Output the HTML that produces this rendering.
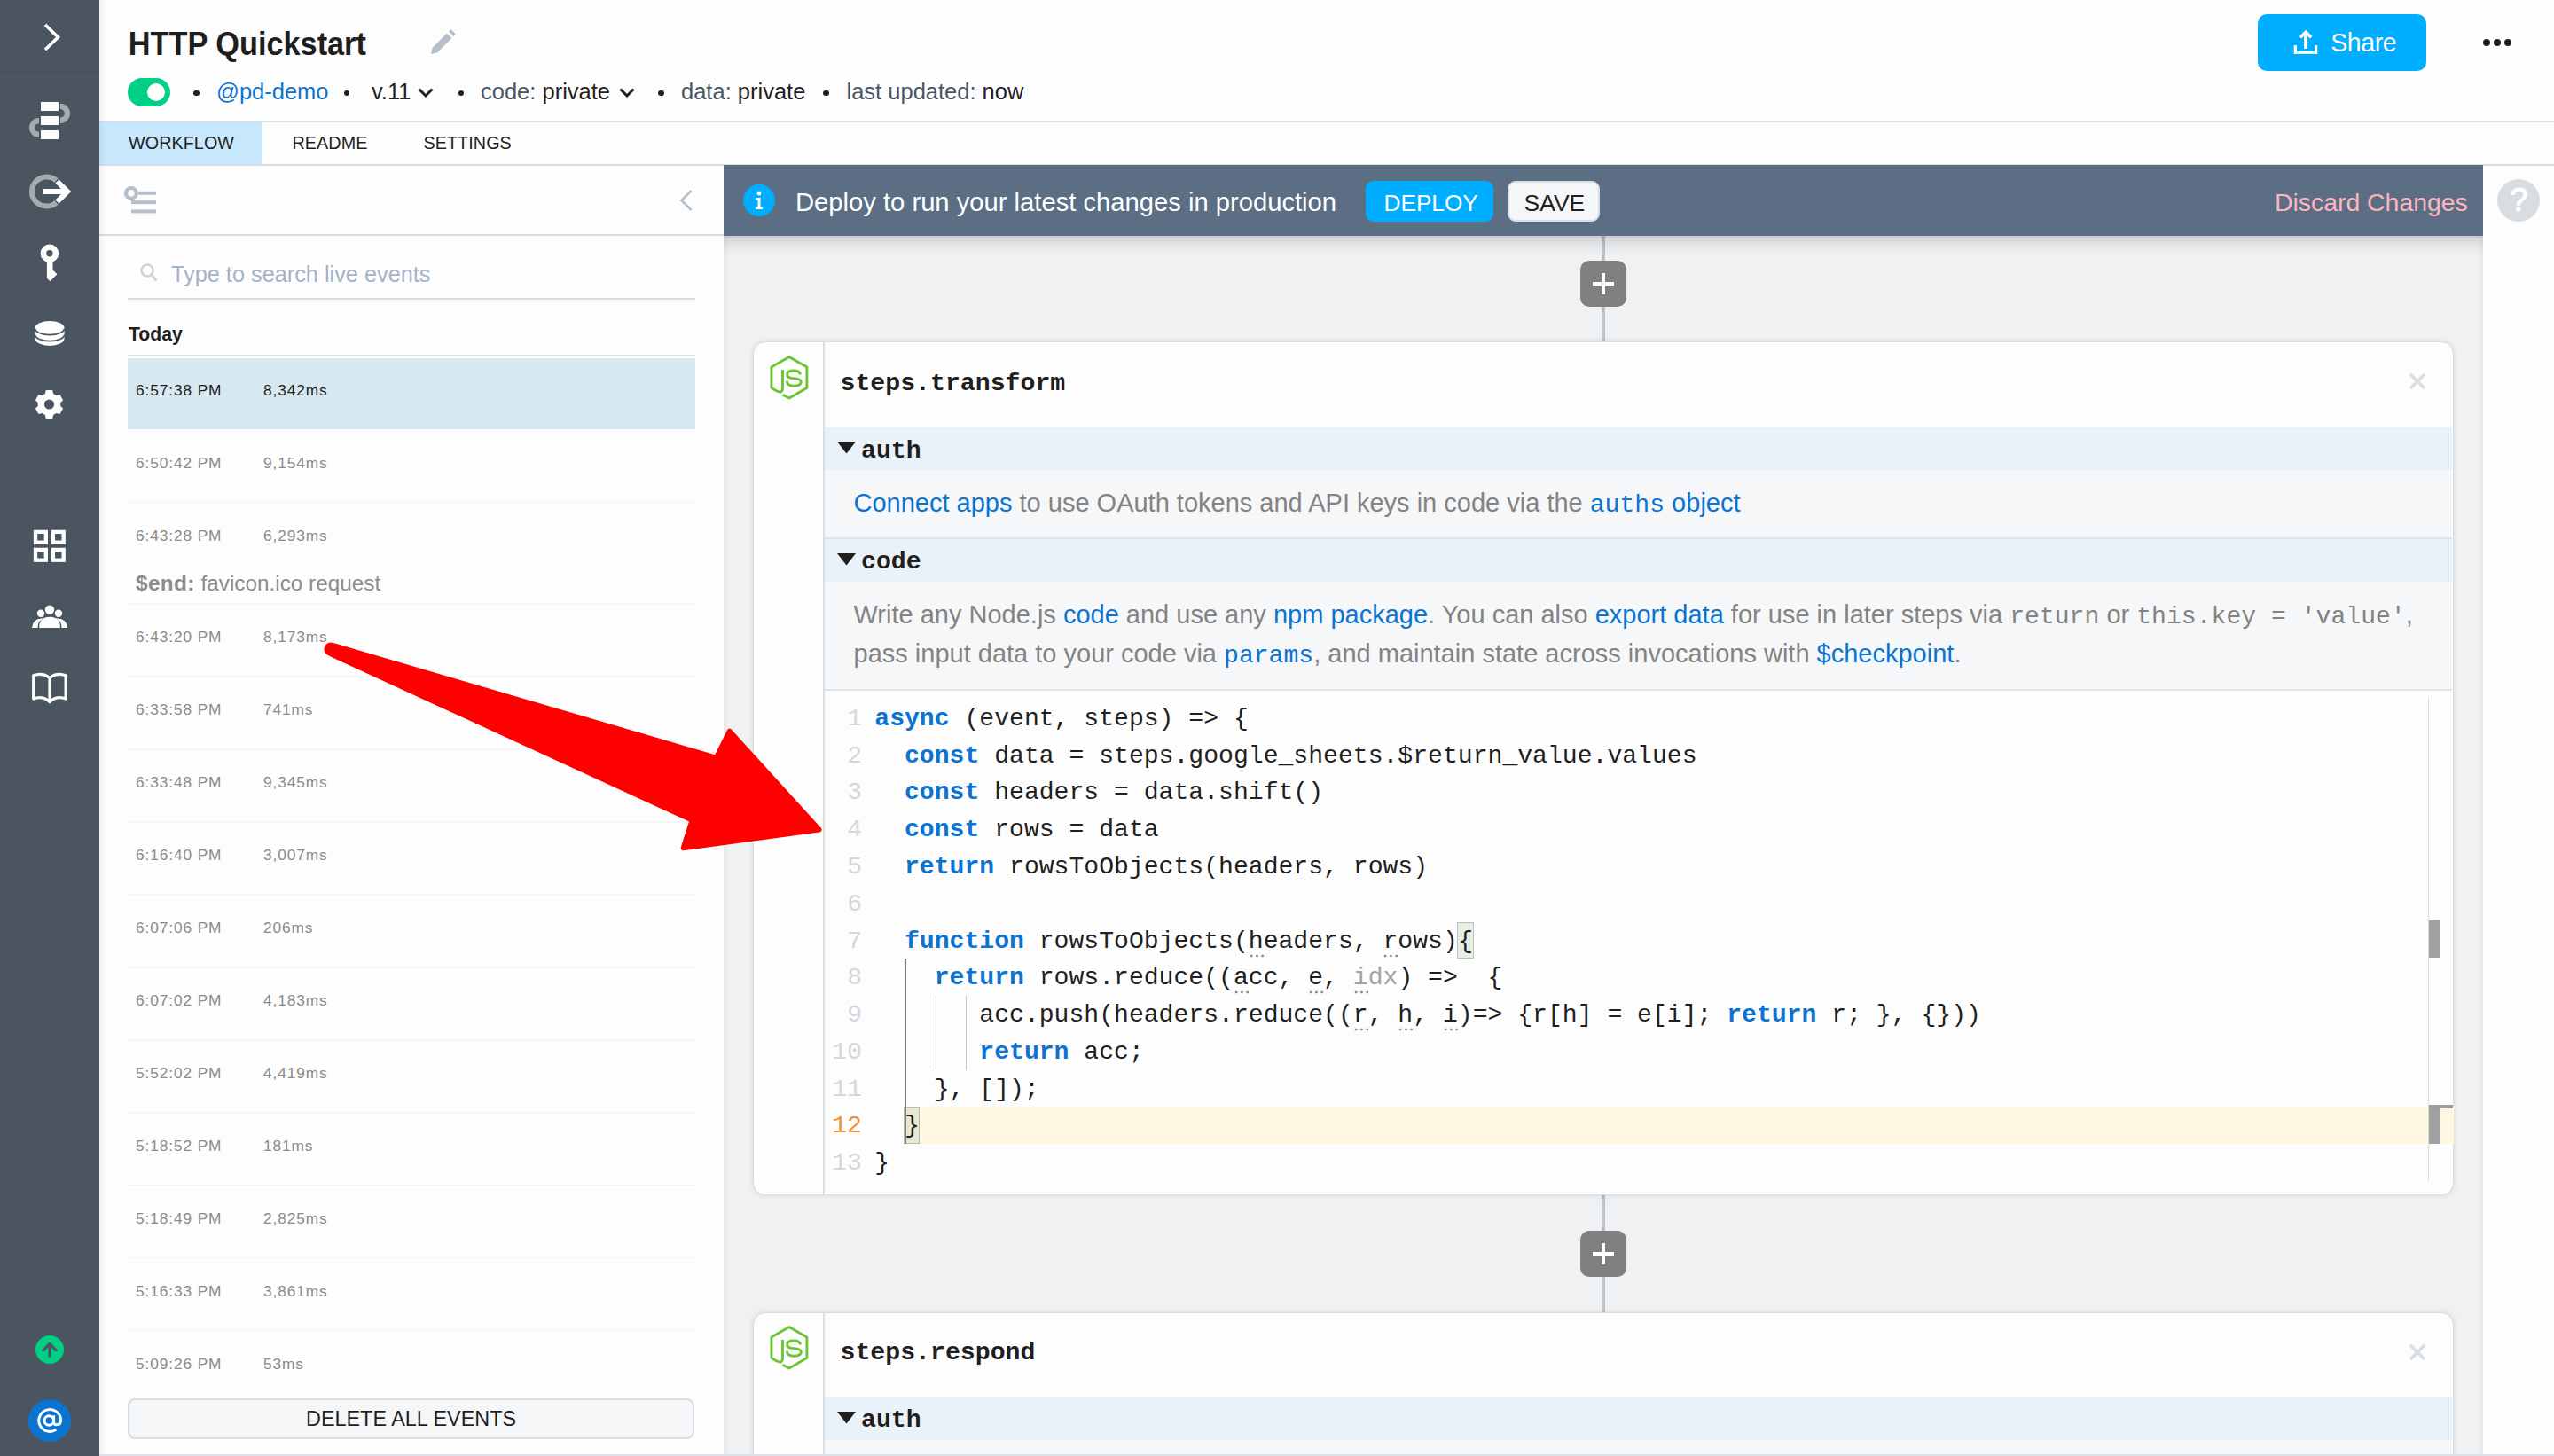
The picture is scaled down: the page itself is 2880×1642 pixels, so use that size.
<!DOCTYPE html><html><head><meta charset="utf-8"><style>html,body{margin:0;padding:0;width:2880px;height:1642px;overflow:hidden;background:#fdfdfe}</style></head><body><div style="position:absolute;left:0px;top:0px;width:112px;height:1642px;background:#4a5560"></div><div style="position:absolute;left:0px;top:0px;width:112px;height:80px;background:#4b5561"></div><div style="position:absolute;left:0px;top:80px;width:112px;height:2px;background:#47515c"></div><svg style="position:absolute;left:0;top:0" width="112" height="900" viewBox="0 0 112 900"><path d="M51 28 L65.5 42 L51 56" fill="none" stroke="#fff" stroke-width="3.6"/><rect x="46" y="115" width="20" height="10" fill="#fff"/><rect x="46" y="131" width="20" height="10" fill="#fff"/><rect x="46" y="147" width="20" height="10" fill="#fff"/><path d="M68 119.95 A7.95 7.95 0 0 1 68 135.85" fill="none" stroke="#a5abb1" stroke-width="6.2"/><path d="M44 136.05 A7.95 7.95 0 0 0 44 151.95" fill="none" stroke="#a5abb1" stroke-width="6.2"/><path d="M63.5 203.5 A16.6 16.6 0 1 0 63.5 228.5" fill="none" stroke="#a5abb1" stroke-width="6"/><path d="M48 216 H72" stroke="#fff" stroke-width="6"/><path d="M64.5 204.5 L76 216 L64.5 227.5" fill="none" stroke="#fff" stroke-width="6"/><circle cx="55.9" cy="285.7" r="7" fill="none" stroke="#fff" stroke-width="6.6"/><path d="M52.9 290 V313.6 L56.4 317.3 L64.4 309.3 L59.5 304.4 V290 Z" fill="#fff"/><path d="M39.6 369.8 A16.45 7.9 0 0 1 72.5 369.8 V382 A16.45 7.9 0 0 1 39.6 382 Z" fill="#fff"/><path d="M39.6 370.5 A16.45 7.2 0 0 0 72.5 370.5 M39.6 377.5 A16.45 7.2 0 0 0 72.5 377.5" fill="none" stroke="#4a5560" stroke-width="1.7"/><path d="M50.71 444.13 L51.83 440.12 L59.17 440.12 L60.29 444.13 L61.90 444.91 L63.38 445.91 L67.42 444.88 L71.09 451.23 L68.18 454.22 L68.30 456.00 L68.18 457.78 L71.09 460.77 L67.42 467.12 L63.38 466.09 L61.90 467.09 L60.29 467.87 L59.17 471.88 L51.83 471.88 L50.71 467.87 L49.10 467.09 L47.62 466.09 L43.58 467.12 L39.91 460.77 L42.82 457.78 L42.70 456.00 L42.82 454.22 L39.91 451.23 L43.58 444.88 L47.62 445.91 L49.10 444.91 Z M61.1 456 A5.6 5.6 0 1 0 49.9 456 A5.6 5.6 0 1 0 61.1 456 Z" fill="#fff" fill-rule="evenodd"/><g fill="none" stroke="#fff" stroke-width="4.3"><rect x="40" y="599.9" width="11.8" height="11.8"/><rect x="59.9" y="599.9" width="11.8" height="11.8"/><rect x="40" y="619.9" width="11.8" height="11.8"/><rect x="59.9" y="619.9" width="11.8" height="11.8"/></g><path d="M36 708 Q37 697.5 47 697.5 L50 697.5 Q42 700 42.5 708 Z" fill="#fff"/><path d="M76 708 Q75 697.5 65 697.5 L62 697.5 Q70 700 69.5 708 Z" fill="#fff"/><path d="M44.2 708 Q44.2 695.8 56 695.8 Q67.9 695.8 67.9 708 Z" fill="#fff"/><circle cx="56" cy="687.6" r="5.2" fill="#fff"/><circle cx="46" cy="691.7" r="4.2" fill="#fff"/><circle cx="66" cy="691.7" r="4.2" fill="#fff"/><path d="M37.8 761.8 Q48 758 56 764.5 Q64 758 74.2 761.8 V788 Q64 784 56 791.5 Q48 784 37.8 788 Z" fill="none" stroke="#fff" stroke-width="3.4" stroke-linejoin="round"/><path d="M56 764.5 V790" stroke="#fff" stroke-width="3.2"/></svg><svg style="position:absolute;left:40px;top:1506px" width="32" height="32" viewBox="0 0 32 32"><circle cx="16" cy="16" r="16" fill="#00d084"/><path d="M16 23.2 V9.6 M8.9 16.6 L16 9.5 L23.1 16.6" fill="none" stroke="#4a5560" stroke-width="3.3" stroke-linecap="round" stroke-linejoin="round"/></svg><svg style="position:absolute;left:32px;top:1578px" width="48" height="48" viewBox="0 0 48 48"><circle cx="24" cy="24" r="24" fill="#0b74d1"/><g fill="none" stroke="#fff" stroke-width="3"><circle cx="23.3" cy="24" r="5.3"/><path d="M28.6 18.2 V25.5 Q28.6 28.8 31.6 28.8 Q36.6 28.8 36.6 23.5 A12.4 12.4 0 1 0 31.2 34.2"/></g></svg><div style="position:absolute;left:112px;top:0px;width:2768px;height:137px;background:#fdfdfe"></div><div style="position:absolute;left:112px;top:136px;width:2768px;height:2px;background:#d6dde4"></div><div style="position:absolute;left:144.8px;top:32.97px;font-family:'Liberation Sans', sans-serif;font-size:34.3px;line-height:34.3px;color:#1e1e1e;font-weight:bold;white-space:pre;transform:scaleY(1.06);transform-origin:0 29px">HTTP Quickstart</div><svg style="position:absolute;left:484px;top:32px" width="32" height="32" viewBox="0 0 32 32"><path d="M2 29 L3.5 22 L20 5.5 L25.5 11 L9 27.5 Z" fill="#b4bfcb"/><path d="M22 3.5 L24.5 1 L30 6.5 L27.5 9 Z" fill="#b4bfcb"/></svg><div style="position:absolute;left:144px;top:88px;width:48px;height:32px;background:#00d084;border-radius:16px"></div><div style="position:absolute;left:166px;top:94px;width:20px;height:20px;background:#fff;border-radius:50%"></div><div style="position:absolute;left:218.3px;top:101.8px;width:6.4px;height:6.4px;background:#1f1f1f;border-radius:50%"></div><div style="position:absolute;left:387.8px;top:101.8px;width:6.4px;height:6.4px;background:#1f1f1f;border-radius:50%"></div><div style="position:absolute;left:516.8px;top:101.8px;width:6.4px;height:6.4px;background:#1f1f1f;border-radius:50%"></div><div style="position:absolute;left:742.3px;top:101.8px;width:6.4px;height:6.4px;background:#1f1f1f;border-radius:50%"></div><div style="position:absolute;left:928.3px;top:101.8px;width:6.4px;height:6.4px;background:#1f1f1f;border-radius:50%"></div><div style="position:absolute;left:244px;top:90.71px;font-family:'Liberation Sans', sans-serif;font-size:25.5px;line-height:25.5px;color:#0b74d1;font-weight:normal;white-space:pre;">@pd-demo</div><div style="position:absolute;left:419px;top:90.71px;font-family:'Liberation Sans', sans-serif;font-size:25.5px;line-height:25.5px;color:#1f1f1f;font-weight:normal;white-space:pre;">v.11</div><div style="position:absolute;left:542px;top:90.71px;font-family:'Liberation Sans', sans-serif;font-size:25.5px;line-height:25.5px;color:#1f1f1f;font-weight:normal;white-space:pre;"><span style="color:#4a5664">code:</span> private</div><div style="position:absolute;left:768px;top:90.71px;font-family:'Liberation Sans', sans-serif;font-size:25.5px;line-height:25.5px;color:#1f1f1f;font-weight:normal;white-space:pre;"><span style="color:#4a5664">data:</span> private</div><div style="position:absolute;left:954.5px;top:90.71px;font-family:'Liberation Sans', sans-serif;font-size:25.5px;line-height:25.5px;color:#1f1f1f;font-weight:normal;white-space:pre;"><span style="color:#4a5664">last updated:</span> now</div><svg style="position:absolute;left:471px;top:98px" width="18" height="14" viewBox="0 0 18 14"><path d="M1.5 2.5 L9 10 L16.5 2.5" fill="none" stroke="#1f1f1f" stroke-width="3"/></svg><svg style="position:absolute;left:698px;top:98px" width="18" height="14" viewBox="0 0 18 14"><path d="M1.5 2.5 L9 10 L16.5 2.5" fill="none" stroke="#1f1f1f" stroke-width="3"/></svg><div style="position:absolute;left:2546px;top:16px;width:190px;height:64px;background:#00aeff;border-radius:10px"></div><svg style="position:absolute;left:2584px;top:32px" width="32" height="32" viewBox="0 0 32 32"><path d="M4.3 19 V27.5 H27.6 V19" fill="none" stroke="#fff" stroke-width="3.2"/><path d="M16.1 23 V5" fill="none" stroke="#fff" stroke-width="3.9"/><path d="M10 10.3 L16.1 4.2 L22.2 10.3" fill="none" stroke="#fff" stroke-width="3.4"/></svg><div style="position:absolute;left:2628.3px;top:33.99px;font-family:'Liberation Sans', sans-serif;font-size:28.6px;line-height:28.6px;color:#fff;font-weight:normal;white-space:pre;letter-spacing:-0.5px">Share</div><div style="position:absolute;left:2800px;top:43.7px;width:8px;height:8px;background:#1f1f1f;border-radius:50%"></div><div style="position:absolute;left:2812px;top:43.7px;width:8px;height:8px;background:#1f1f1f;border-radius:50%"></div><div style="position:absolute;left:2824px;top:43.7px;width:8px;height:8px;background:#1f1f1f;border-radius:50%"></div><div style="position:absolute;left:112px;top:138px;width:2768px;height:47px;background:#fdfdfe"></div><div style="position:absolute;left:112px;top:138px;width:184px;height:46.5px;background:#c7e8fc"></div><div style="position:absolute;left:112px;top:184.5px;width:2768px;height:2px;background:#d6dde4"></div><div style="position:absolute;left:145px;top:151.64px;font-family:'Liberation Sans', sans-serif;font-size:19.8px;line-height:19.8px;color:#1f1f1f;font-weight:normal;white-space:pre;letter-spacing:0.05px">WORKFLOW</div><div style="position:absolute;left:329.5px;top:151.64px;font-family:'Liberation Sans', sans-serif;font-size:19.8px;line-height:19.8px;color:#1f1f1f;font-weight:normal;white-space:pre;letter-spacing:0.05px">README</div><div style="position:absolute;left:477.5px;top:151.64px;font-family:'Liberation Sans', sans-serif;font-size:19.8px;line-height:19.8px;color:#1f1f1f;font-weight:normal;white-space:pre;letter-spacing:0.05px">SETTINGS</div><div style="position:absolute;left:112px;top:187px;width:704px;height:1455px;background:#fdfdfe"></div><div style="position:absolute;left:112px;top:264px;width:704px;height:2px;background:#d6dde4"></div><svg style="position:absolute;left:138px;top:208px" width="42" height="36" viewBox="0 0 42 36"><circle cx="9.9" cy="9.9" r="5.9" fill="none" stroke="#b3bfcb" stroke-width="4.2"/><rect x="18" y="7.8" width="20" height="4" fill="#b3bfcb"/><rect x="10" y="18.1" width="28" height="4" fill="#b3bfcb"/><rect x="10" y="28.4" width="28" height="4" fill="#b3bfcb"/></svg><svg style="position:absolute;left:764px;top:212px" width="20" height="28" viewBox="0 0 20 28"><path d="M15.5 3 L4.5 14 L15.5 25" fill="none" stroke="#b3bfcb" stroke-width="2.6"/></svg><svg style="position:absolute;left:156px;top:295px" width="24" height="26" viewBox="0 0 24 26"><circle cx="10" cy="10" r="6.5" fill="none" stroke="#cdd3d9" stroke-width="2.6"/><path d="M14.5 15 L20.5 21.5" stroke="#cdd3d9" stroke-width="3"/></svg><div style="position:absolute;left:193px;top:296.58px;font-family:'Liberation Sans', sans-serif;font-size:25.3px;line-height:25.3px;color:#a4b3c5;font-weight:normal;white-space:pre;">Type to search live events</div><div style="position:absolute;left:144px;top:336px;width:640px;height:2px;background:#d6dde4"></div><div style="position:absolute;left:145px;top:366.05px;font-family:'Liberation Sans', sans-serif;font-size:21.2px;line-height:21.2px;color:#1f1f1f;font-weight:bold;white-space:pre;">Today</div><div style="position:absolute;left:144px;top:400px;width:640px;height:2px;background:#dce2e8"></div><div style="position:absolute;left:144px;top:404px;width:640px;height:80px;background:#d7e8f0"></div><div style="position:absolute;left:153px;top:431.86px;font-family:'Liberation Sans', sans-serif;font-size:17.3px;line-height:17.3px;color:#1f1f1f;font-weight:normal;white-space:pre;letter-spacing:0.9px">6:57:38 PM</div><div style="position:absolute;left:297px;top:431.86px;font-family:'Liberation Sans', sans-serif;font-size:17.3px;line-height:17.3px;color:#1f1f1f;font-weight:normal;white-space:pre;letter-spacing:0.9px">8,342ms</div><div style="position:absolute;left:153px;top:513.80px;font-family:'Liberation Sans', sans-serif;font-size:17.3px;line-height:17.3px;color:#8a8a8a;font-weight:normal;white-space:pre;letter-spacing:0.9px">6:50:42 PM</div><div style="position:absolute;left:297px;top:513.80px;font-family:'Liberation Sans', sans-serif;font-size:17.3px;line-height:17.3px;color:#8a8a8a;font-weight:normal;white-space:pre;letter-spacing:0.9px">9,154ms</div><div style="position:absolute;left:144px;top:565.78px;width:640px;height:1.5px;background:#f4f6f7"></div><div style="position:absolute;left:153px;top:595.74px;font-family:'Liberation Sans', sans-serif;font-size:17.3px;line-height:17.3px;color:#8a8a8a;font-weight:normal;white-space:pre;letter-spacing:0.9px">6:43:28 PM</div><div style="position:absolute;left:297px;top:595.74px;font-family:'Liberation Sans', sans-serif;font-size:17.3px;line-height:17.3px;color:#8a8a8a;font-weight:normal;white-space:pre;letter-spacing:0.9px">6,293ms</div><div style="position:absolute;left:153px;top:645.93px;font-family:'Liberation Sans', sans-serif;font-size:24.3px;line-height:24.3px;color:#8c8c8c;font-weight:normal;white-space:pre;"><b style="letter-spacing:0.4px">$end:</b> favicon.ico request</div><div style="position:absolute;left:144px;top:680.4200000000001px;width:640px;height:1.5px;background:#f4f6f7"></div><div style="position:absolute;left:153px;top:710.38px;font-family:'Liberation Sans', sans-serif;font-size:17.3px;line-height:17.3px;color:#8a8a8a;font-weight:normal;white-space:pre;letter-spacing:0.9px">6:43:20 PM</div><div style="position:absolute;left:297px;top:710.38px;font-family:'Liberation Sans', sans-serif;font-size:17.3px;line-height:17.3px;color:#8a8a8a;font-weight:normal;white-space:pre;letter-spacing:0.9px">8,173ms</div><div style="position:absolute;left:144px;top:762.36px;width:640px;height:1.5px;background:#f4f6f7"></div><div style="position:absolute;left:153px;top:792.32px;font-family:'Liberation Sans', sans-serif;font-size:17.3px;line-height:17.3px;color:#8a8a8a;font-weight:normal;white-space:pre;letter-spacing:0.9px">6:33:58 PM</div><div style="position:absolute;left:297px;top:792.32px;font-family:'Liberation Sans', sans-serif;font-size:17.3px;line-height:17.3px;color:#8a8a8a;font-weight:normal;white-space:pre;letter-spacing:0.9px">741ms</div><div style="position:absolute;left:144px;top:844.3px;width:640px;height:1.5px;background:#f4f6f7"></div><div style="position:absolute;left:153px;top:874.26px;font-family:'Liberation Sans', sans-serif;font-size:17.3px;line-height:17.3px;color:#8a8a8a;font-weight:normal;white-space:pre;letter-spacing:0.9px">6:33:48 PM</div><div style="position:absolute;left:297px;top:874.26px;font-family:'Liberation Sans', sans-serif;font-size:17.3px;line-height:17.3px;color:#8a8a8a;font-weight:normal;white-space:pre;letter-spacing:0.9px">9,345ms</div><div style="position:absolute;left:144px;top:926.24px;width:640px;height:1.5px;background:#f4f6f7"></div><div style="position:absolute;left:153px;top:956.20px;font-family:'Liberation Sans', sans-serif;font-size:17.3px;line-height:17.3px;color:#8a8a8a;font-weight:normal;white-space:pre;letter-spacing:0.9px">6:16:40 PM</div><div style="position:absolute;left:297px;top:956.20px;font-family:'Liberation Sans', sans-serif;font-size:17.3px;line-height:17.3px;color:#8a8a8a;font-weight:normal;white-space:pre;letter-spacing:0.9px">3,007ms</div><div style="position:absolute;left:144px;top:1008.18px;width:640px;height:1.5px;background:#f4f6f7"></div><div style="position:absolute;left:153px;top:1038.14px;font-family:'Liberation Sans', sans-serif;font-size:17.3px;line-height:17.3px;color:#8a8a8a;font-weight:normal;white-space:pre;letter-spacing:0.9px">6:07:06 PM</div><div style="position:absolute;left:297px;top:1038.14px;font-family:'Liberation Sans', sans-serif;font-size:17.3px;line-height:17.3px;color:#8a8a8a;font-weight:normal;white-space:pre;letter-spacing:0.9px">206ms</div><div style="position:absolute;left:144px;top:1090.1200000000001px;width:640px;height:1.5px;background:#f4f6f7"></div><div style="position:absolute;left:153px;top:1120.08px;font-family:'Liberation Sans', sans-serif;font-size:17.3px;line-height:17.3px;color:#8a8a8a;font-weight:normal;white-space:pre;letter-spacing:0.9px">6:07:02 PM</div><div style="position:absolute;left:297px;top:1120.08px;font-family:'Liberation Sans', sans-serif;font-size:17.3px;line-height:17.3px;color:#8a8a8a;font-weight:normal;white-space:pre;letter-spacing:0.9px">4,183ms</div><div style="position:absolute;left:144px;top:1172.0600000000002px;width:640px;height:1.5px;background:#f4f6f7"></div><div style="position:absolute;left:153px;top:1202.02px;font-family:'Liberation Sans', sans-serif;font-size:17.3px;line-height:17.3px;color:#8a8a8a;font-weight:normal;white-space:pre;letter-spacing:0.9px">5:52:02 PM</div><div style="position:absolute;left:297px;top:1202.02px;font-family:'Liberation Sans', sans-serif;font-size:17.3px;line-height:17.3px;color:#8a8a8a;font-weight:normal;white-space:pre;letter-spacing:0.9px">4,419ms</div><div style="position:absolute;left:144px;top:1254.0px;width:640px;height:1.5px;background:#f4f6f7"></div><div style="position:absolute;left:153px;top:1283.96px;font-family:'Liberation Sans', sans-serif;font-size:17.3px;line-height:17.3px;color:#8a8a8a;font-weight:normal;white-space:pre;letter-spacing:0.9px">5:18:52 PM</div><div style="position:absolute;left:297px;top:1283.96px;font-family:'Liberation Sans', sans-serif;font-size:17.3px;line-height:17.3px;color:#8a8a8a;font-weight:normal;white-space:pre;letter-spacing:0.9px">181ms</div><div style="position:absolute;left:144px;top:1335.9399999999998px;width:640px;height:1.5px;background:#f4f6f7"></div><div style="position:absolute;left:153px;top:1365.90px;font-family:'Liberation Sans', sans-serif;font-size:17.3px;line-height:17.3px;color:#8a8a8a;font-weight:normal;white-space:pre;letter-spacing:0.9px">5:18:49 PM</div><div style="position:absolute;left:297px;top:1365.90px;font-family:'Liberation Sans', sans-serif;font-size:17.3px;line-height:17.3px;color:#8a8a8a;font-weight:normal;white-space:pre;letter-spacing:0.9px">2,825ms</div><div style="position:absolute;left:144px;top:1417.8799999999999px;width:640px;height:1.5px;background:#f4f6f7"></div><div style="position:absolute;left:153px;top:1447.84px;font-family:'Liberation Sans', sans-serif;font-size:17.3px;line-height:17.3px;color:#8a8a8a;font-weight:normal;white-space:pre;letter-spacing:0.9px">5:16:33 PM</div><div style="position:absolute;left:297px;top:1447.84px;font-family:'Liberation Sans', sans-serif;font-size:17.3px;line-height:17.3px;color:#8a8a8a;font-weight:normal;white-space:pre;letter-spacing:0.9px">3,861ms</div><div style="position:absolute;left:144px;top:1499.82px;width:640px;height:1.5px;background:#f4f6f7"></div><div style="position:absolute;left:153px;top:1529.78px;font-family:'Liberation Sans', sans-serif;font-size:17.3px;line-height:17.3px;color:#8a8a8a;font-weight:normal;white-space:pre;letter-spacing:0.9px">5:09:26 PM</div><div style="position:absolute;left:297px;top:1529.78px;font-family:'Liberation Sans', sans-serif;font-size:17.3px;line-height:17.3px;color:#8a8a8a;font-weight:normal;white-space:pre;letter-spacing:0.9px">53ms</div><div style="position:absolute;left:144px;top:1577px;width:639px;height:46px;background:#f5f6f8;border:2px solid #d9dee4;border-radius:8px;box-sizing:border-box"></div><div style="position:absolute;left:345px;top:1589.39px;font-family:'Liberation Sans', sans-serif;font-size:23.4px;line-height:23.4px;color:#1f1f1f;font-weight:normal;white-space:pre;">DELETE ALL EVENTS</div><div style="position:absolute;left:112px;top:1640px;width:704px;height:2px;background:#dfe3e8"></div><div style="position:absolute;left:112px;top:0px;width:8px;height:1642px;background:linear-gradient(to right, rgba(0,0,0,0.05), rgba(0,0,0,0))"></div><div style="position:absolute;left:816px;top:187px;width:1984px;height:1455px;background:#eff1f3"></div><div style="position:absolute;left:2800px;top:187px;width:80px;height:1455px;background:#fdfdfe"></div><div style="position:absolute;left:816px;top:266px;width:7px;height:1376px;background:linear-gradient(to right, rgba(0,0,0,0.045), rgba(0,0,0,0))"></div><div style="position:absolute;left:2793px;top:266px;width:7px;height:1376px;background:linear-gradient(to left, rgba(0,0,0,0.045), rgba(0,0,0,0))"></div><div style="position:absolute;left:2816px;top:202px;width:48px;height:48px;background:#d8dde2;border-radius:50%"></div><div style="position:absolute;left:2830.2px;top:207.90px;font-family:'Liberation Sans', sans-serif;font-size:36.5px;line-height:36.5px;color:#fff;font-weight:normal;white-space:pre;-webkit-text-stroke:1.1px #fff">?</div><div style="position:absolute;left:1806px;top:266px;width:4px;height:118px;background:#b8c3cf"></div><div style="position:absolute;left:1782px;top:294px;width:52px;height:52px;background:#808080;border-radius:10px"></div><div style="position:absolute;left:1796px;top:317.9px;width:24px;height:4.2px;background:#fff"></div><div style="position:absolute;left:1805.9px;top:308px;width:4.2px;height:24px;background:#fff"></div><div style="position:absolute;left:1806px;top:1348px;width:4px;height:132px;background:#b8c3cf"></div><div style="position:absolute;left:1782px;top:1388px;width:52px;height:52px;background:#808080;border-radius:10px"></div><div style="position:absolute;left:1796px;top:1411.9px;width:24px;height:4.2px;background:#fff"></div><div style="position:absolute;left:1805.9px;top:1402px;width:4.2px;height:24px;background:#fff"></div><div style="position:absolute;left:816px;top:266px;width:1984px;height:22px;background:linear-gradient(to bottom, rgba(0,0,0,0.16), rgba(0,0,0,0.05) 45%, rgba(0,0,0,0))"></div><div style="position:absolute;left:816px;top:186px;width:1984px;height:80px;background:#5b6e83"></div><svg style="position:absolute;left:838px;top:208px" width="36" height="36" viewBox="0 0 36 36"><circle cx="18" cy="18" r="18" fill="#00aeff"/><circle cx="18" cy="10" r="2.4" fill="#fff"/><path d="M14 15 H19.5 V25.5 H22 V28 H14 V25.5 H16.5 V17.5 H14 Z" fill="#fff"/></svg><div style="position:absolute;left:897px;top:214.08px;font-family:'Liberation Sans', sans-serif;font-size:29.2px;line-height:29.2px;color:#fff;font-weight:normal;white-space:pre;">Deploy to run your latest changes in production</div><div style="position:absolute;left:1540px;top:204px;width:144px;height:46px;background:#00aeff;border-radius:9px"></div><div style="position:absolute;left:1560.5px;top:216.42px;font-family:'Liberation Sans', sans-serif;font-size:26.2px;line-height:26.2px;color:#fff;font-weight:normal;white-space:pre;">DEPLOY</div><div style="position:absolute;left:1700px;top:204px;width:104px;height:46px;background:#f5f6f8;border:2px solid #d9dee4;border-radius:9px;box-sizing:border-box"></div><div style="position:absolute;left:1718.5px;top:216.17px;font-family:'Liberation Sans', sans-serif;font-size:26.5px;line-height:26.5px;color:#1f1f1f;font-weight:normal;white-space:pre;">SAVE</div><div style="position:absolute;left:2565px;top:214.46px;font-family:'Liberation Sans', sans-serif;font-size:28.4px;line-height:28.4px;color:#ffb3bd;font-weight:normal;white-space:pre;">Discard Changes</div><div style="position:absolute;left:848.5px;top:384.5px;width:1918.5px;height:963.5px;background:#fdfdfe;border:1.5px solid #d6dde3;border-radius:14px;box-sizing:border-box;box-shadow:0 0 7px rgba(0,0,0,0.11)"></div><div style="position:absolute;left:928px;top:385px;width:2px;height:962px;background:#d9dfe4"></div><svg style="position:absolute;left:860px;top:395px" width="60" height="60" viewBox="0 0 60 60"><g fill="none" stroke="#6cc532" stroke-width="2.9" stroke-linejoin="round"><path d="M22.5 50.2 L29.9 54 L49.9 42.6 V19 L29.9 7.6 L9.9 19 V42.6 L15.5 45.8 Q22.5 49.5 22.5 42.5 V22"/><path d="M42.6 27.3 Q41.5 23 35.2 23 Q27.6 23 27.6 27.5 Q27.6 31.3 35 31.6 Q43.3 32 43.3 35.8 Q43.3 40.2 35.2 40.2 Q27.6 40.2 27.2 34.6"/></g></svg><div style="position:absolute;left:947.5px;top:418.58px;font-family:'Liberation Mono', monospace;font-size:28.2px;line-height:28.2px;color:#1f1f1f;font-weight:bold;white-space:pre;">steps.transform</div><svg style="position:absolute;left:2716px;top:419.7px" width="20" height="20" viewBox="0 0 20 20"><path d="M2 2 L18 18 M18 2 L2 18" stroke="#d8dee3" stroke-width="3.7"/></svg><div style="position:absolute;left:930px;top:482px;width:1834.5px;height:48px;background:#e9f2f9"></div><svg style="position:absolute;left:943.5px;top:498px" width="22" height="14" viewBox="0 0 22 14"><path d="M0 0 H21 L10.5 13.6 Z" fill="#1f1f1f"/></svg><div style="position:absolute;left:971px;top:494.58px;font-family:'Liberation Mono', monospace;font-size:28.2px;line-height:28.2px;color:#1f1f1f;font-weight:bold;white-space:pre;">auth</div><div style="position:absolute;left:930px;top:530px;width:1834.5px;height:76px;background:#f5f7f9"></div><div style="position:absolute;left:962.5px;top:553.25px;font-family:'Liberation Sans', sans-serif;font-size:29px;line-height:29px;color:#838383;font-weight:normal;white-space:pre;"><span style="color:#0b74d1">Connect apps</span> to use OAuth tokens and API keys in code via the <span style="font-family:'Liberation Mono',monospace;font-size:28.1px;color:#0b74d1">auths</span><span style="color:#0b74d1"> object</span></div><div style="position:absolute;left:930px;top:606px;width:1834.5px;height:2px;background:#dce3e9"></div><div style="position:absolute;left:930px;top:608px;width:1834.5px;height:48px;background:#e9f2f9"></div><svg style="position:absolute;left:943.5px;top:623.5px" width="22" height="14" viewBox="0 0 22 14"><path d="M0 0 H21 L10.5 13.6 Z" fill="#1f1f1f"/></svg><div style="position:absolute;left:971px;top:619.58px;font-family:'Liberation Mono', monospace;font-size:28.2px;line-height:28.2px;color:#1f1f1f;font-weight:bold;white-space:pre;">code</div><div style="position:absolute;left:930px;top:656px;width:1834.5px;height:121px;background:#f5f7f9"></div><div style="position:absolute;left:962.5px;top:679.25px;font-family:'Liberation Sans', sans-serif;font-size:29px;line-height:29px;color:#838383;font-weight:normal;white-space:pre;">Write any Node.js <span style="color:#0b74d1">code</span> and use any <span style="color:#0b74d1">npm package</span>. You can also <span style="color:#0b74d1">export data</span> for use in later steps via <span style="font-family:'Liberation Mono',monospace;font-size:28.1px;color:#838383">return</span> or <span style="font-family:'Liberation Mono',monospace;font-size:28.1px;color:#838383">this.key = 'value'</span>,</div><div style="position:absolute;left:962.5px;top:723.45px;font-family:'Liberation Sans', sans-serif;font-size:29px;line-height:29px;color:#838383;font-weight:normal;white-space:pre;">pass input data to your code via <span style="font-family:'Liberation Mono',monospace;font-size:28.1px;color:#0b74d1">params</span>, and maintain state across invocations with <span style="color:#0b74d1">$checkpoint</span>.</div><div style="position:absolute;left:930px;top:777px;width:1834.5px;height:2px;background:#dce3e9"></div><div style="position:absolute;left:1030px;top:1248.36px;width:1708px;height:41.5px;background:#fff6e1"></div><div style="position:absolute;left:955.13px;top:796.96px;font-family:'Liberation Mono', monospace;font-size:28.1px;line-height:28.1px;color:#d3d8dd;font-weight:normal;white-space:pre;">1</div><div style="position:absolute;left:986.3px;top:796.96px;font-family:'Liberation Mono', monospace;font-size:28.1px;line-height:28.1px;color:#1f1f1f;font-weight:normal;white-space:pre;"><b style="color:#0b74d1">async</b> (event, steps) =&gt; {</div><div style="position:absolute;left:955.13px;top:838.72px;font-family:'Liberation Mono', monospace;font-size:28.1px;line-height:28.1px;color:#d3d8dd;font-weight:normal;white-space:pre;">2</div><div style="position:absolute;left:986.3px;top:838.72px;font-family:'Liberation Mono', monospace;font-size:28.1px;line-height:28.1px;color:#1f1f1f;font-weight:normal;white-space:pre;">  <b style="color:#0b74d1">const</b> data = steps.google_sheets.$return_value.values</div><div style="position:absolute;left:955.13px;top:880.48px;font-family:'Liberation Mono', monospace;font-size:28.1px;line-height:28.1px;color:#d3d8dd;font-weight:normal;white-space:pre;">3</div><div style="position:absolute;left:986.3px;top:880.48px;font-family:'Liberation Mono', monospace;font-size:28.1px;line-height:28.1px;color:#1f1f1f;font-weight:normal;white-space:pre;">  <b style="color:#0b74d1">const</b> headers = data.shift()</div><div style="position:absolute;left:955.13px;top:922.24px;font-family:'Liberation Mono', monospace;font-size:28.1px;line-height:28.1px;color:#d3d8dd;font-weight:normal;white-space:pre;">4</div><div style="position:absolute;left:986.3px;top:922.24px;font-family:'Liberation Mono', monospace;font-size:28.1px;line-height:28.1px;color:#1f1f1f;font-weight:normal;white-space:pre;">  <b style="color:#0b74d1">const</b> rows = data</div><div style="position:absolute;left:955.13px;top:964.00px;font-family:'Liberation Mono', monospace;font-size:28.1px;line-height:28.1px;color:#d3d8dd;font-weight:normal;white-space:pre;">5</div><div style="position:absolute;left:986.3px;top:964.00px;font-family:'Liberation Mono', monospace;font-size:28.1px;line-height:28.1px;color:#1f1f1f;font-weight:normal;white-space:pre;">  <b style="color:#0b74d1">return</b> rowsToObjects(headers, rows)</div><div style="position:absolute;left:955.13px;top:1005.76px;font-family:'Liberation Mono', monospace;font-size:28.1px;line-height:28.1px;color:#d3d8dd;font-weight:normal;white-space:pre;">6</div><div style="position:absolute;left:986.3px;top:1005.76px;font-family:'Liberation Mono', monospace;font-size:28.1px;line-height:28.1px;color:#1f1f1f;font-weight:normal;white-space:pre;"></div><div style="position:absolute;left:955.13px;top:1047.52px;font-family:'Liberation Mono', monospace;font-size:28.1px;line-height:28.1px;color:#d3d8dd;font-weight:normal;white-space:pre;">7</div><div style="position:absolute;left:986.3px;top:1047.52px;font-family:'Liberation Mono', monospace;font-size:28.1px;line-height:28.1px;color:#1f1f1f;font-weight:normal;white-space:pre;">  <b style="color:#0b74d1">function</b> rowsToObjects(headers, rows){</div><div style="position:absolute;left:955.13px;top:1089.28px;font-family:'Liberation Mono', monospace;font-size:28.1px;line-height:28.1px;color:#d3d8dd;font-weight:normal;white-space:pre;">8</div><div style="position:absolute;left:986.3px;top:1089.28px;font-family:'Liberation Mono', monospace;font-size:28.1px;line-height:28.1px;color:#1f1f1f;font-weight:normal;white-space:pre;">    <b style="color:#0b74d1">return</b> rows.reduce((acc, e, <span style="color:#a3a3a3">idx</span>) =&gt;  {</div><div style="position:absolute;left:955.13px;top:1131.04px;font-family:'Liberation Mono', monospace;font-size:28.1px;line-height:28.1px;color:#d3d8dd;font-weight:normal;white-space:pre;">9</div><div style="position:absolute;left:986.3px;top:1131.04px;font-family:'Liberation Mono', monospace;font-size:28.1px;line-height:28.1px;color:#1f1f1f;font-weight:normal;white-space:pre;">       acc.push(headers.reduce((r, h, i)=&gt; {r[h] = e[i]; <b style="color:#0b74d1">return</b> r; }, {}))</div><div style="position:absolute;left:938.26px;top:1172.80px;font-family:'Liberation Mono', monospace;font-size:28.1px;line-height:28.1px;color:#d3d8dd;font-weight:normal;white-space:pre;">10</div><div style="position:absolute;left:986.3px;top:1172.80px;font-family:'Liberation Mono', monospace;font-size:28.1px;line-height:28.1px;color:#1f1f1f;font-weight:normal;white-space:pre;">       <b style="color:#0b74d1">return</b> acc;</div><div style="position:absolute;left:938.26px;top:1214.56px;font-family:'Liberation Mono', monospace;font-size:28.1px;line-height:28.1px;color:#d3d8dd;font-weight:normal;white-space:pre;">11</div><div style="position:absolute;left:986.3px;top:1214.56px;font-family:'Liberation Mono', monospace;font-size:28.1px;line-height:28.1px;color:#1f1f1f;font-weight:normal;white-space:pre;">    }, []);</div><div style="position:absolute;left:938.26px;top:1256.32px;font-family:'Liberation Mono', monospace;font-size:28.1px;line-height:28.1px;color:#f0913a;font-weight:normal;white-space:pre;">12</div><div style="position:absolute;left:986.3px;top:1256.32px;font-family:'Liberation Mono', monospace;font-size:28.1px;line-height:28.1px;color:#1f1f1f;font-weight:normal;white-space:pre;">  }</div><div style="position:absolute;left:938.26px;top:1298.08px;font-family:'Liberation Mono', monospace;font-size:28.1px;line-height:28.1px;color:#d3d8dd;font-weight:normal;white-space:pre;">13</div><div style="position:absolute;left:986.3px;top:1298.08px;font-family:'Liberation Mono', monospace;font-size:28.1px;line-height:28.1px;color:#1f1f1f;font-weight:normal;white-space:pre;">}</div><div style="position:absolute;left:1019.04px;top:1248.36px;width:18.37px;height:41.5px;background:#e8e8d2;border:1.5px solid #b8b8a8;box-sizing:border-box"></div><div style="position:absolute;left:1020.04px;top:1256.32px;font-family:'Liberation Mono', monospace;font-size:28.1px;line-height:28.1px;color:#1f1f1f;font-weight:normal;white-space:pre;">}</div><div style="position:absolute;left:1643.23px;top:1039.56px;width:18.37px;height:41.5px;background:#e5efe5;border:1.5px solid #b8c0b8;box-sizing:border-box"></div><div style="position:absolute;left:1644.23px;top:1047.52px;font-family:'Liberation Mono', monospace;font-size:28.1px;line-height:28.1px;color:#1f1f1f;font-weight:normal;white-space:pre;">{</div><div style="position:absolute;left:1020px;top:1081.32px;width:2px;height:208.54px;background:#808080"></div><div style="position:absolute;left:1054.5px;top:1123.08px;width:1.5px;height:83.52px;background:#c8c8c8"></div><div style="position:absolute;left:1088.5px;top:1123.08px;width:1.5px;height:83.52px;background:#c8c8c8"></div><div style="position:absolute;left:1407.5px;top:1075.6px;width:19px;height:4px;background-image:radial-gradient(circle,#8c8c8c 1.3px,transparent 1.7px);background-size:6.3px 4px"></div><div style="position:absolute;left:1559.4px;top:1075.6px;width:19px;height:4px;background-image:radial-gradient(circle,#8c8c8c 1.3px,transparent 1.7px);background-size:6.3px 4px"></div><div style="position:absolute;left:1390.7px;top:1117.3px;width:19px;height:4px;background-image:radial-gradient(circle,#8c8c8c 1.3px,transparent 1.7px);background-size:6.3px 4px"></div><div style="position:absolute;left:1475.0px;top:1117.3px;width:19px;height:4px;background-image:radial-gradient(circle,#8c8c8c 1.3px,transparent 1.7px);background-size:6.3px 4px"></div><div style="position:absolute;left:1525.6px;top:1117.3px;width:19px;height:4px;background-image:radial-gradient(circle,#8c8c8c 1.3px,transparent 1.7px);background-size:6.3px 4px"></div><div style="position:absolute;left:1525.6px;top:1159.1px;width:19px;height:4px;background-image:radial-gradient(circle,#8c8c8c 1.3px,transparent 1.7px);background-size:6.3px 4px"></div><div style="position:absolute;left:1576.2px;top:1159.1px;width:19px;height:4px;background-image:radial-gradient(circle,#8c8c8c 1.3px,transparent 1.7px);background-size:6.3px 4px"></div><div style="position:absolute;left:1626.9px;top:1159.1px;width:19px;height:4px;background-image:radial-gradient(circle,#8c8c8c 1.3px,transparent 1.7px);background-size:6.3px 4px"></div><div style="position:absolute;left:2738.2px;top:786px;width:1px;height:546px;background:#dedede"></div><div style="position:absolute;left:2738.9px;top:1038px;width:13.1px;height:42px;background:#a0a0a0"></div><div style="position:absolute;left:2752px;top:1248.2px;width:14.5px;height:41.5px;background:#fff6e1"></div><div style="position:absolute;left:2738.9px;top:1248.2px;width:13.1px;height:41.5px;background:#a0a0a0"></div><div style="position:absolute;left:2738.9px;top:1246.2px;width:27.5px;height:3.4px;background:#9c9c9a"></div><div style="position:absolute;left:848.5px;top:1480px;width:1918.5px;height:200px;background:#fdfdfe;border:1.5px solid #d6dde3;border-radius:14px;box-sizing:border-box;box-shadow:0 0 7px rgba(0,0,0,0.11)"></div><div style="position:absolute;left:928px;top:1480.5px;width:2px;height:198px;background:#d9dfe4"></div><svg style="position:absolute;left:860px;top:1489.3px" width="60" height="60" viewBox="0 0 60 60"><g fill="none" stroke="#6cc532" stroke-width="2.9" stroke-linejoin="round"><path d="M22.5 50.2 L29.9 54 L49.9 42.6 V19 L29.9 7.6 L9.9 19 V42.6 L15.5 45.8 Q22.5 49.5 22.5 42.5 V22"/><path d="M42.6 27.3 Q41.5 23 35.2 23 Q27.6 23 27.6 27.5 Q27.6 31.3 35 31.6 Q43.3 32 43.3 35.8 Q43.3 40.2 35.2 40.2 Q27.6 40.2 27.2 34.6"/></g></svg><div style="position:absolute;left:947.5px;top:1511.88px;font-family:'Liberation Mono', monospace;font-size:28.2px;line-height:28.2px;color:#1f1f1f;font-weight:bold;white-space:pre;">steps.respond</div><svg style="position:absolute;left:2716px;top:1515px" width="20" height="20" viewBox="0 0 20 20"><path d="M2 2 L18 18 M18 2 L2 18" stroke="#d8dee3" stroke-width="3.7"/></svg><div style="position:absolute;left:930px;top:1576.4px;width:1834.5px;height:47.2px;background:#e9f2f9"></div><svg style="position:absolute;left:943.5px;top:1591.6px" width="22" height="14" viewBox="0 0 22 14"><path d="M0 0 H21 L10.5 13.6 Z" fill="#1f1f1f"/></svg><div style="position:absolute;left:971px;top:1587.98px;font-family:'Liberation Mono', monospace;font-size:28.2px;line-height:28.2px;color:#1f1f1f;font-weight:bold;white-space:pre;">auth</div><div style="position:absolute;left:930px;top:1623.6px;width:1834.5px;height:60px;background:#f5f7f9"></div><div style="position:absolute;left:112px;top:1640px;width:2768px;height:2px;background:#dfe3e8"></div><svg style="position:absolute;left:0;top:0" width="1000" height="1000" viewBox="0 0 1000 1000"><path d="M377.0 728.3 L807.6 854.5 L822.6 824.5 L923.8 935.7 L770.5 956.4 L780.4 924.9 L373.8 738.0 Z" fill="#ff0000" stroke="#ff0000" stroke-width="5.6" stroke-linejoin="round"/><circle cx="373" cy="732.2" r="7.6" fill="#ff0000"/></svg></body></html>
